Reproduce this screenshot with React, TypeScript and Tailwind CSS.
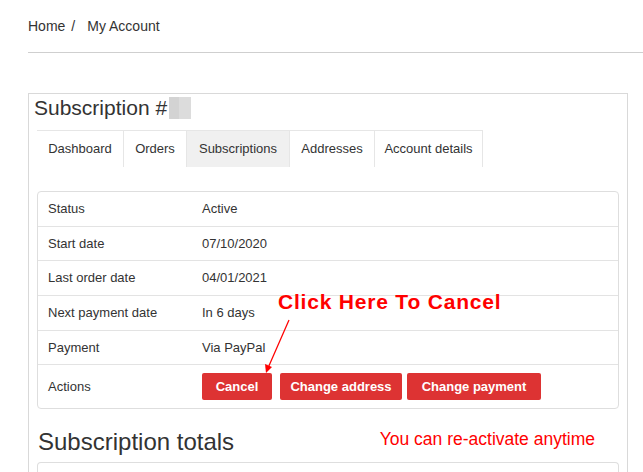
const tabs = [
  { label: "Dashboard", w: "w-[87px]", active: false },
  { label: "Orders", w: "w-[63px]", active: false },
  { label: "Subscriptions", w: "w-[103px]", active: true },
  { label: "Addresses", w: "w-[85px]", active: false },
  { label: "Account details", w: "w-[108px]", active: false },
];

const rows = [
  { label: "Status", value: "Active", h: "h-[35px]" },
  { label: "Start date", value: "07/10/2020", h: "h-[34px]" },
  { label: "Last order date", value: "04/01/2021", h: "h-[35px]" },
  { label: "Next payment date", value: "In 6 days", h: "h-[35px]" },
  { label: "Payment", value: "Via PayPal", h: "h-[34px]" },
];

export default function App() {
  return (
    <div className="relative min-h-[472px] overflow-hidden bg-white font-['Liberation_Sans',Arial,sans-serif] text-[#333]">
      {/* breadcrumb */}
      <div className="ml-[28px] border-b border-[#cfcfcf] pt-[16px] pb-[16px] text-[14px] leading-[20px]">
        <span>Home</span>
        <span className="ml-[6px] mr-[12px]">/</span>
        <span>My Account</span>
      </div>

      <div className="ml-[28px] mt-[40px] w-[600px] border border-b-0 border-[#d9d9d9] pb-[10px]">
        <h2 className="flex items-center pl-[5px] pt-[2px] text-[21px] leading-[24px]">
          Subscription #
          <span className="ml-[2px] flex h-[22px]">
            <span className="w-[10px] bg-[#d3d3d3]" />
            <span className="w-[12px] bg-[#dcdcdc]" />
          </span>
        </h2>

        <div className="ml-[8px] mt-[10px] flex">
          {tabs.map((t) => (
            <div
              key={t.label}
              className={`${t.w} flex h-[37px] items-center justify-center border-t border-r border-[#e6e6e6] text-[13px] ${
                t.active ? "bg-[#f0f0f0]" : "bg-white"
              }`}
            >
              {t.label}
            </div>
          ))}
        </div>

        {/* details table */}
        <div className="ml-[8px] mt-[24px] w-[582px] rounded-[4px] border border-[#dedede] text-[13px]">
          {rows.map((r) => (
            <div key={r.label} className={`flex ${r.h} items-center border-b border-[#e3e3e3]`}>
              <div className="w-[164px] pl-[10px]">{r.label}</div>
              <div>{r.value}</div>
            </div>
          ))}
          <div className="flex h-[43px] items-center">
            <div className="w-[164px] pl-[10px]">Actions</div>
            <div className="flex">
              <button className="h-[27px] w-[70px] rounded-[2px] bg-[#dd3333] text-[13px] font-bold text-white">
                Cancel
              </button>
              <button className="ml-[8px] h-[27px] w-[122px] rounded-[2px] bg-[#dd3333] text-[13px] font-bold text-white">
                Change address
              </button>
              <button className="ml-[5px] h-[27px] w-[134px] rounded-[2px] bg-[#dd3333] text-[13px] font-bold text-white">
                Change payment
              </button>
            </div>
          </div>
        </div>

        <div className="ml-[9px] mt-[18px] flex w-[557px] items-start justify-between">
          <h2 className="text-[24px] leading-[30px] text-[#333]">Subscription totals</h2>
          <span className="mt-[2px] text-[17.5px] leading-[20px] text-[#ff0000]">You can re-activate anytime</span>
        </div>

        <div className="ml-[8px] mt-[5px] h-[40px] w-[582px] rounded-t-[4px] border border-b-0 border-[#dedede]" />
      </div>

      {/* annotation */}
      <div className="absolute left-[278px] top-[290px] text-[21px] font-bold leading-[24px] tracking-[0.8px] text-[#ff0000]">
        Click Here To Cancel
      </div>
      <svg className="absolute left-[260px] top-[316px]" width="34" height="60" viewBox="0 0 34 60">
        <line x1="29" y1="4" x2="8" y2="52" stroke="#ff0000" strokeWidth="1.2" />
        <polygon points="6,57 5,48 12,51" fill="#ff0000" />
      </svg>
    </div>
  );
}
